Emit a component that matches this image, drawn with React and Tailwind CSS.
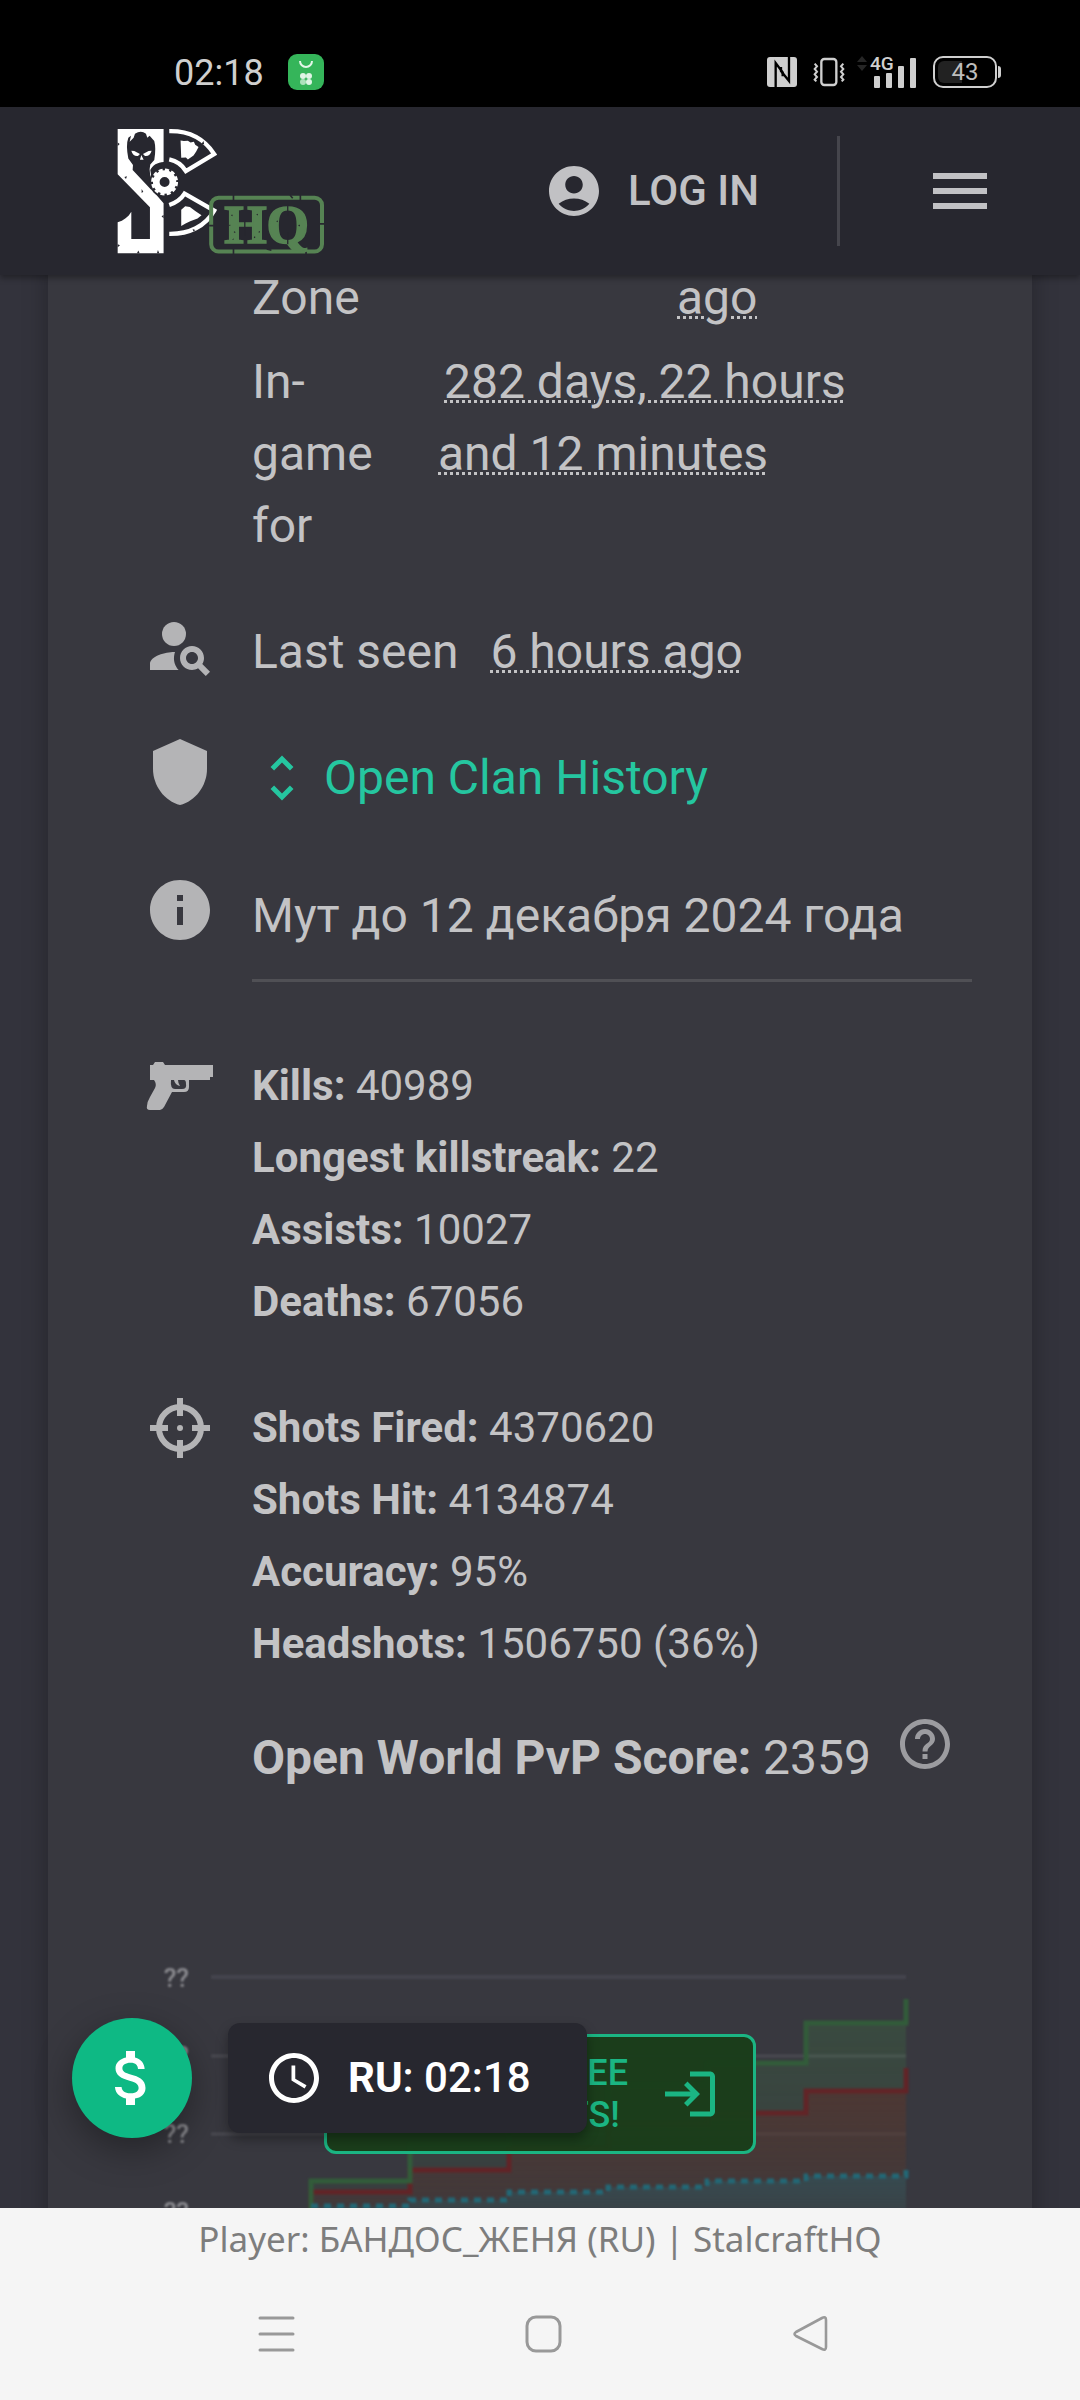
import React from 'react'
import {
  MdAccountCircle,
  MdAttachMoney,
  MdHelpOutline,
  MdInfo,
  MdLogin,
  MdMenu,
  MdPersonSearch,
  MdSchedule,
  MdShield,
  MdUnfoldMore
} from 'react-icons/md'

const combatStats = [
  { label: 'Kills', value: '40989' },
  { label: 'Longest killstreak', value: '22' },
  { label: 'Assists', value: '10027' },
  { label: 'Deaths', value: '67056' }
]

const shotStats = [
  { label: 'Shots Fired', value: '4370620' },
  { label: 'Shots Hit', value: '4134874' },
  { label: 'Accuracy', value: '95%' },
  { label: 'Headshots', value: '1506750 (36%)' }
]

const NfcIcon = () => (
  <svg viewBox="0 0 90 90" className="w-[30px] h-[30px]" aria-hidden="true">
    <rect width="90" height="90" rx="9" fill="#cfcfcf" />
    <path d="M26 90V18L47 46V58" fill="none" stroke="#000" strokeWidth="7" />
    <path d="M66 0V72L42 42V30" fill="none" stroke="#000" strokeWidth="7" />
  </svg>
)

const VibrateIcon = () => (
  <svg viewBox="0 0 96 90" className="w-8 h-[30px]" fill="none" stroke="#cfcfcf" aria-hidden="true">
    <rect x="25" y="6" width="45" height="78" rx="9" strokeWidth="7" />
    <path d="M5 20l7 8-7 8 7 8-7 8 7 8-7 8 5 5M91 20l-7 8 7 8-7 8 7 8-7 8 7 8-5 5" strokeWidth="6" />
  </svg>
)

const SignalIcon = () => (
  <svg viewBox="0 -6 60 46" className="w-[60px] h-[46px]" fill="#cfcfcf" aria-hidden="true">
    <path d="M0 7l5-6 5 6zM0 10h10l-5 6z" fill="#262626" />
    <text x="13" y="15" fontSize="19" fontWeight="500" fontFamily="Roboto, sans-serif">4G</text>
    <rect x="17" y="21" width="6" height="12" rx="1" />
    <rect x="29" y="18" width="6" height="15" rx="1" />
    <rect x="41" y="11" width="6" height="22" rx="1" />
    <rect x="53" y="3" width="6" height="30" rx="1" />
  </svg>
)

const PistolIcon = ({ className }) => (
  <svg viewBox="0 0 72 72" className={className} fill="currentColor" aria-hidden="true">
    <path
      fillRule="evenodd"
      d="M11 12H19L21 15H69V27H66V30H45V37Q45 42 40 42H28L20 57Q18 60 16 60H6Q2 60 3 56Q3 52 6 47L11 38Q13 34 10 30H6V15H9ZM27 30Q26 39 31 39H38Q43 39 42 34Q42 30 40 30H34Q34 33 36 36Q31 35 30 30Z"
    />
  </svg>
)

const CrosshairIcon = ({ className }) => (
  <svg viewBox="0 0 24 24" className={className} fill="none" stroke="currentColor" strokeWidth="2" aria-hidden="true">
    <circle cx="12" cy="12" r="7" />
    <path d="M12 2v6M12 16v6M2 12h6M16 12h6" />
    <circle cx="12" cy="12" r="1" fill="currentColor" stroke="none" />
  </svg>
)

const Logo = () => (
  <svg viewBox="50 40 622 376" className="w-[207px] h-[126px] overflow-visible" aria-hidden="true">
    <g fill="#fff">
      <path d="M52 42H190V141C172 141 156 152 150 165L160 230L190 265V415H52V322C70 316 84 306 93 290V372H149V277L52 178Z" />
      <path d="M241 76l10 2 12-1 8 5 10-2 4 9 10 7-7 13-8 12-17 12-6-6-14 1z" />
      <path d="M243 284l12-10 14 2 16 12 19 13-12 10-22 8-14 7-13 7z" />
    </g>
    {/* skull */}
    <path
      d="M92 62L88 80L100 68L104 56Q122 44 137 56L141 68L148 62L162 78Q168 100 162 135L150 148L148 163L154 226L97 165L98 150L84 130Q76 90 84 68Z"
      fill="#27272f"
    />
    <path d="M93 107l9 1 17 9-6 6q-15 2-20-16zM154 107l-9 1-17 9 6 6q15 2 20-16zM123 120l7 14h-11z" fill="#fff" />
    {/* radiation blades */}
    <g fill="none" stroke="#fff" strokeWidth="13">
      <path d="M207 48C266 47 312 70 342 117L257 168Q240 140 207 133" />
      <path d="M207 270Q238 260 253 236L342 287C316 334 266 358 207 357" />
    </g>
    <circle cx="193" cy="201" r="46" fill="#27272f" />
    <circle cx="193" cy="201" r="25" fill="none" stroke="#fff" strokeWidth="20" />
    <circle cx="193" cy="201" r="36" fill="none" stroke="#fff" strokeWidth="9" strokeDasharray="12 6.85" />
    {/* stamp */}
    <rect x="333" y="248" width="333" height="162" rx="22" fill="none" stroke="#568353" strokeWidth="12" />
    <path
      d="M400 240v16M601 240v16M570 240l8 10M400 402v16M327 332h14M660 327h14M618 400v18M500 402l14 4"
      stroke="#27272f"
      strokeWidth="5"
    />
    <text
      x="372"
      y="384"
      fontSize="164"
      fontWeight="700"
      fontFamily="'Liberation Serif', serif"
      fill="#568353"
      stroke="#568353"
      strokeWidth="5"
    >
      HQ
    </text>
    <path
      d="M434 316v46M563 268v34M563 352v36M394 300l3 2M402 350l3 3M398 372l2 2M470 298l3 2M476 350l3 2M530 318l3 2M596 330l3 3M388 330l2 2M462 366l3 2"
      stroke="#27272f"
      strokeWidth="4"
    />
    <path
      d="M52 82l6 5-6 6M72 186l8-2-3 8M124 222v12l5-4M190 246l-8 3 8 6M190 300l-6 4 6 6M110 415l4-8 4 8M170 415l3-10 4 10M52 388l7 3-7 6M310 78l-6 8 8 2M280 350l-3-8 8 3"
      fill="#27272f"
    />
  </svg>
)

// Locked history chart, shown dimmed behind the call to action
const HistoryChart = () => (
  <svg viewBox="108 1950 864 300" className="block w-full blur-[1px]" role="img" aria-label="Player history">
    <defs>
      <linearGradient id="greenFill" x1="0" y1="2023" x2="0" y2="2230" gradientUnits="userSpaceOnUse">
        <stop offset="0" stopColor="#43a047" stopOpacity="0.18" />
        <stop offset="1" stopColor="#43a047" stopOpacity="0.03" />
      </linearGradient>
      <linearGradient id="redFill" x1="0" y1="2090" x2="0" y2="2230" gradientUnits="userSpaceOnUse">
        <stop offset="0" stopColor="#5a2e2c" stopOpacity="0.6" />
        <stop offset="1" stopColor="#5a2e2c" stopOpacity="0.2" />
      </linearGradient>
      <linearGradient id="tealFill" x1="0" y1="2176" x2="0" y2="2230" gradientUnits="userSpaceOnUse">
        <stop offset="0" stopColor="#2d5660" stopOpacity="0.6" />
        <stop offset="1" stopColor="#2d5660" stopOpacity="0.2" />
      </linearGradient>
    </defs>
    <path d="M211 1977H906" stroke="#45454e" strokeWidth="4" />
    <path d="M211 2056H906M211 2134H906M211 2212H906" stroke="#4a4a52" strokeWidth="3" />
    <g fontSize="26" fontWeight="500" fontFamily="Roboto, sans-serif" fill="#8c8c91" textAnchor="end">
      <text x="189" y="1987">??</text>
      <text x="189" y="2065">??</text>
      <text x="189" y="2143">??</text>
      <text x="189" y="2221">??</text>
    </g>
    <path d="M311 2250V2181H410V2144H509V2112H608V2085H707V2063H806V2023H906V2250Z" fill="url(#greenFill)" />
    <path d="M311 2250V2192H410V2170H509V2148H608V2123H707V2113H806V2091H906V2250Z" fill="url(#redFill)" />
    <path d="M311 2250V2206H410V2200H509V2192H608V2187H707V2181H806V2176H906V2250Z" fill="url(#tealFill)" />
    <g fill="none" strokeWidth="5">
      <path d="M311 2250V2192H410V2170H509V2148H608V2123H707V2113H806V2091H906V2068" stroke="#622427" />
      <path d="M311 2250V2181H410V2144H509V2112H608V2085H707V2063H806V2023H906V1999" stroke="#325c3a" />
      <path
        d="M311 2206H410V2200H509V2192H608V2187H707V2181H806V2176H906V2166"
        stroke="#236876"
        strokeDasharray="7 6"
      />
    </g>
  </svg>
)

const Underlined = ({ children }) => (
  <span className="underline decoration-dotted decoration-[3px] underline-offset-2">{children}</span>
)

const InfoRow = ({ icon, children, className = '' }) => (
  <div className={`flex items-start gap-9 pl-9 ${className}`}>
    <div className="w-[72px] shrink-0 text-[#b4b4b6]">{icon}</div>
    <div className="flex-1 min-w-0">{children}</div>
  </div>
)

const StatList = ({ items }) => (
  <dl className="text-[42px] leading-[72px]">
    {items.map((item) => (
      <div key={item.label}>
        <dt className="inline font-bold">{item.label}:</dt> <dd className="inline">{item.value}</dd>
      </div>
    ))}
  </dl>
)

const StatusBar = () => (
  <div className="bg-black pt-9 pl-[174px] pr-[79px]">
    <div className="h-[71px] flex items-center justify-between">
      <div className="flex items-center gap-6 text-[36px] leading-none text-[#cfcfcf]">
        <span className="pt-0.5">02:18</span>
        <svg viewBox="0 0 36 36" className="w-9 h-9" aria-hidden="true">
          <rect width="36" height="36" rx="9" fill="#35b55a" />
          <path d="M12 7a6 6 0 0 0 12 0" fill="none" stroke="#e4f7e9" strokeWidth="2" />
          <g fill="#dff5e5">
            <circle cx="15" cy="22" r="3" />
            <circle cx="21" cy="22" r="3" />
            <circle cx="15" cy="28" r="3" opacity="0.7" />
            <circle cx="21" cy="28" r="3" />
          </g>
        </svg>
      </div>
      <div className="flex items-center">
        <NfcIcon />
        <div className="ml-4 mr-3">
          <VibrateIcon />
        </div>
        <SignalIcon />
        <div className="ml-4 flex items-center gap-px">
          <div className="w-16 h-8 rounded-[10px] border-2 border-[#cfcfcf] p-[3px] flex items-center relative">
            <div className="w-6 h-full rounded-l-md bg-[#222222]" />
            <span className="absolute inset-0 flex items-center justify-center text-[24px] leading-none text-[#bdbdbd]">43</span>
          </div>
          <div className="w-[3px] h-3 rounded-r bg-[#cfcfcf]" />
        </div>
      </div>
    </div>
  </div>
)

const Header = () => (
  <header className="relative z-10 bg-[#27272f] shadow-[0_3px_6px_rgba(0,0,0,0.35)]">
    <StatusBar />
    <div className="h-[168px] pl-[117px] pr-[84px] flex items-center justify-between">
      <a href="#home" aria-label="StalcraftHQ home">
        <Logo />
      </a>
      <div className="flex items-center text-[#c1c1c4]">
        <a href="#login" className="flex items-center gap-6 text-[42px] leading-[72px] font-medium">
          <MdAccountCircle className="w-[60px] h-[60px]" />
          LOG IN
        </a>
        <div className="w-[3px] h-[110px] bg-[#45454c] ml-[78px] mr-[84px]" />
        <button type="button" aria-label="Menu">
          <MdMenu className="w-[72px] h-[72px]" />
        </button>
      </div>
    </div>
  </header>
)

const PlayerCard = () => (
  <section className="mx-12 px-[60px] bg-[#38383f] text-[#c3c3c5] text-[48px] leading-[72px] shadow-[0_0_24px_rgba(0,0,0,0.28)]">
    <div className="pl-36 flex">
      <div className="w-[425px]">Zone</div>
      <Underlined>ago</Underlined>
    </div>
    <div className="pl-36 pt-3 flex">
      <div className="w-[186px] shrink-0 pr-12">In-game for</div>
      <div className="pr-24">
        <span className="inline-block w-1.5" />
        <Underlined>282 days, 22 hours and 12 minutes</Underlined>
      </div>
    </div>

    <InfoRow icon={<MdPersonSearch className="w-[72px] h-[72px] -mt-1.5" />} className="mt-[54px]">
      Last seen <span className="ml-5"><Underlined>6 hours ago</Underlined></span>
    </InfoRow>

    <InfoRow icon={<MdShield className="w-[72px] h-[72px] -mt-1.5" />} className="mt-[54px]">
      <button type="button" className="flex items-center gap-3 text-[#25c6a0]">
        <MdUnfoldMore className="w-[60px] h-[60px]" />
        Open Clan History
      </button>
    </InfoRow>

    <InfoRow icon={<MdInfo className="w-[72px] h-[72px] -mt-1.5" />} className="mt-[66px]">
      <p className="pb-[27px] border-b-[3px] border-[#505055]">Мут до 12 декабря 2024 года</p>
    </InfoRow>

    <InfoRow icon={<PistolIcon className="w-[72px] h-[72px]" />} className="mt-[68px]">
      <StatList items={combatStats} />
    </InfoRow>

    <InfoRow icon={<CrosshairIcon className="w-[72px] h-[72px]" />} className="mt-[54px]">
      <StatList items={shotStats} />
    </InfoRow>

    <div className="pl-36 mt-[42px] flex items-start gap-6">
      <p>
        <strong className="font-bold">Open World PvP Score:</strong> 2359
      </p>
      <button type="button" aria-label="About the score" className="-mt-2 text-[#9c9ca0]">
        <MdHelpOutline className="w-[60px] h-[60px]" />
      </button>
    </div>

    <div className="relative mt-[156px]">
      <HistoryChart />
      <button
        type="button"
        className="absolute top-[84px] left-1/2 -translate-x-1/2 w-[432px] h-[120px] pr-[33px] flex items-center justify-end gap-8 rounded-xl border-[3px] border-[#1bb583] bg-[#193d19]/95 text-[#1bb583]"
      >
        <span className="text-center text-[36px] leading-[42px] font-medium whitespace-nowrap">
          LOGIN FOR FREE
          <br />
          PLAYER STATS!
        </span>
        <MdLogin className="w-[60px] h-[60px] shrink-0" />
      </button>
    </div>
  </section>
)

const NavBar = () => (
  <footer className="bg-[#f5f5f5] h-48 flex flex-col text-center">
    <p className="pt-1 text-[35px] leading-[54px] text-[#7d7d7d] font-['Noto_Sans',sans-serif]">
      Player: БАНДОС_ЖЕНЯ (RU) | StalcraftHQ
    </p>
    <nav className="pl-[252px] pr-[246px] pt-[43px] flex justify-between">
      <button type="button" aria-label="Recent apps">
        <svg viewBox="0 0 48 48" className="w-12 h-12" stroke="#999" strokeWidth="3" strokeLinecap="round">
          <path d="M8 9h33M8 25h33M8 41h33" />
        </svg>
      </button>
      <button type="button" aria-label="Home">
        <svg viewBox="0 0 48 48" className="w-12 h-12" fill="none" stroke="#999" strokeWidth="3">
          <rect x="8" y="8" width="33" height="34" rx="9" />
        </svg>
      </button>
      <button type="button" aria-label="Back">
        <svg viewBox="0 0 48 48" className="w-12 h-12" fill="none" stroke="#999" strokeWidth="2.6" strokeLinejoin="round">
          <path d="M10 23L36 9Q40 7 40 11V38Q40 42 36 40L10 27Q7 25 10 23Z" />
        </svg>
      </button>
    </nav>
  </footer>
)

const App = () => {
  return (
    <div className="h-screen flex flex-col bg-[#33333c] font-[Roboto,sans-serif]">
      <Header />
      <main className="relative flex-1 min-h-0 -mt-[13px] overflow-hidden">
        <PlayerCard />
        <div className="absolute bottom-[70px] left-[72px] flex items-center gap-9">
          <button
            type="button"
            aria-label="Donate"
            className="w-[120px] h-[120px] rounded-full bg-[#0eb984] text-white flex items-center justify-center shadow-[0_12px_36px_rgba(0,0,0,0.35)]"
          >
            <MdAttachMoney className="w-[72px] h-[72px]" />
          </button>
          <button
            type="button"
            className="h-[110px] pl-9 pr-14 flex items-center gap-6 rounded-xl bg-[#27272f] text-white text-[42px] font-medium shadow-[0_6px_12px_rgba(0,0,0,0.35)]"
          >
            <MdSchedule className="w-[60px] h-[60px]" />
            <span className="pb-0.5"><b className="font-bold">RU</b>: 02:18</span>
          </button>
        </div>
      </main>
      <NavBar />
    </div>
  )
}

export default App
